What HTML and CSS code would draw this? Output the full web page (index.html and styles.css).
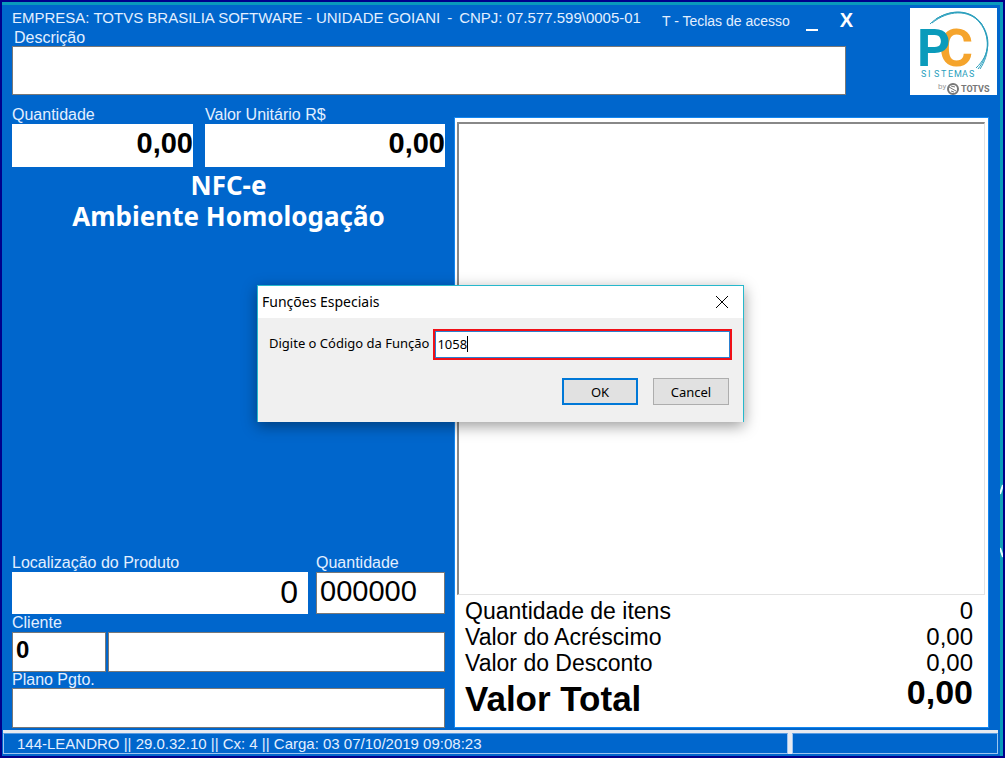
FILE: index.html
```html
<!DOCTYPE html>
<html lang="pt-BR">
<head>
<meta charset="utf-8">
<title>PC Sistemas - NFC-e</title>
<link rel="stylesheet" href="styles.css">
</head>
<body>
<div class="app">
  <header class="top">
    <div class="top-main">
      <div class="title-row">
        <span class="company">EMPRESA: TOTVS BRASILIA SOFTWARE - UNIDADE GOIANI</span>
        <span class="company">-</span>
        <span class="company">CNPJ: 07.577.599\0005-01</span>
        <button class="link-button" type="button">T - Teclas de acesso</button>
        <button class="window-button" type="button" aria-label="Minimizar"><span class="minimize"></span></button>
        <button class="window-button" type="button">X</button>
      </div>
      <label class="label label-description" for="descricao">Descrição</label>
      <input class="field field-description" id="descricao" type="text">
    </div>
    <svg class="logo" viewBox="0 0 87 87" role="img" aria-label="PC Sistemas by TOTVS">
      <rect width="87" height="87" fill="#fff"/>
      <g fill="none" stroke="#2a9fbd">
        <path d="M20 16C34 2 58-1 70 14C82 29 80 47 66 60" stroke-width="1"/>
        <path d="M22 15C38 2 59 1 70 15C81 29 79 47 68 61" stroke-width="1"/>
        <path d="M26 11C42 1 60 2 71 15C80 29 80 46 70 61" stroke-width="1"/>
      </g>
      <text class="logo-c" x="29" y="58">C</text>
      <text class="logo-p" x="7" y="58">P</text>
      <text class="logo-name" x="11 18 24 31 38 44 52 59" y="69">SISTEMAS</text>
      <text class="logo-by" x="28" y="81">by</text>
      <circle cx="43" cy="81" r="5" fill="none" stroke="#777" stroke-width="2"/>
      <path d="M39 79l7 4M41 78l4 1M41 83l3 1" stroke="#777" stroke-width="1"/>
      <text class="logo-totvs" x="51" y="84">TOTVS</text>
    </svg>
  </header>

  <main class="content">
    <section class="left">
      <div class="row row-values">
        <div class="cell cell-quantity">
          <label class="label" for="qtd">Quantidade</label>
          <input class="field field-flat field-number" id="qtd" type="text" value="0,00">
        </div>
        <div class="cell cell-price">
          <label class="label" for="valor">Valor Unitário R$</label>
          <input class="field field-flat field-number" id="valor" type="text" value="0,00">
        </div>
      </div>
      <h1 class="environment">NFC-e<br>Ambiente Homologação</h1>
      <div class="row row-location">
        <div class="cell cell-location">
          <label class="label" for="local">Localização do Produto</label>
          <input class="field field-flat field-location" id="local" type="text" value="0">
        </div>
        <div class="cell cell-stock">
          <label class="label" for="estoque">Quantidade</label>
          <input class="field field-stock" id="estoque" type="text" value="000000">
        </div>
      </div>
      <label class="label" for="cliente">Cliente</label>
      <div class="row row-client">
        <input class="field field-code" id="cliente" type="text" value="0">
        <input class="field field-client" type="text" aria-label="Nome do cliente">
      </div>
      <label class="label label-plan" for="plano">Plano Pgto.</label>
      <input class="field field-plan" id="plano" type="text">
    </section>

    <section class="receipt">
      <div class="receipt-list"></div>
      <dl class="totals">
        <div class="total"><dt>Quantidade de itens</dt><dd>0</dd></div>
        <div class="total"><dt>Valor do Acréscimo</dt><dd>0,00</dd></div>
        <div class="total"><dt>Valor do Desconto</dt><dd>0,00</dd></div>
        <div class="total total-final"><dt>Valor Total</dt><dd>0,00</dd></div>
      </dl>
    </section>
  </main>

  <footer class="status">
    <div class="status-cell status-info">144-LEANDRO || 29.0.32.10 || Cx: 4 || Carga: 03 07/10/2019 09:08:23</div>
    <div class="status-cell status-extra"></div>
  </footer>
  <svg class="edge-mark" viewBox="0 0 3 74" aria-hidden="true">
    <rect width="3" height="74" fill="#12a0b8"/>
    <path d="M3 1L0 10M0 64L3 73" stroke="#e4ffff" stroke-width="2"/>
  </svg>
</div>

<form class="dialog" role="dialog" aria-labelledby="dialog-title">
  <div class="dialog-bar">
    <h2 class="dialog-title" id="dialog-title">Funções Especiais</h2>
    <button class="dialog-close" type="button" aria-label="Fechar">
      <svg class="close-icon" viewBox="0 0 12 12"><path d="M0 0L12 12M12 0L0 12" stroke="#000" stroke-width="1"/></svg>
    </button>
  </div>
  <div class="dialog-body">
    <div class="dialog-field">
      <label class="dialog-label" for="codigo">Digite o Código da Função</label>
      <div class="code-wrap">
        <input class="code-input" id="codigo" type="text" value="1058">
        <span class="caret"></span>
      </div>
    </div>
    <div class="dialog-actions">
      <button class="dialog-button dialog-button-default" type="button">OK</button>
      <button class="dialog-button" type="button">Cancel</button>
    </div>
  </div>
</form>
</body>
</html>
```
FILE: styles.css
```css
* {
  box-sizing: border-box;
}

body {
  margin: 0;
  font-family: "Liberation Sans", Arial, sans-serif;
  color: #000;
}

button,
input {
  font-family: inherit;
  margin: 0;
}

.app {
  position: relative;
  display: flex;
  flex-direction: column;
  min-height: 100vh;
  background: #0066cc;
  border: 2px solid #00008b;
  box-shadow: inset -3px 3px 0 #0a9abb;
}

/* header */
.top {
  display: flex;
  justify-content: space-between;
  padding: 6px 6px 0 10px;
}

.top-main {
  flex: 1;
  display: flex;
  flex-direction: column;
  max-width: 834px;
}

.title-row {
  display: flex;
  align-items: center;
  height: 22px;
  color: #e3efff;
}

.company {
  font-size: 15px;
  line-height: 22px;
  padding-bottom: 2px;
  margin-right: 7px;
  white-space: nowrap;
}

.link-button,
.window-button {
  border: 0;
  padding: 0;
  background: none;
  color: #e3efff;
}

.link-button {
  margin: 4px 16px 0 14px;
  font-size: 14px;
  white-space: nowrap;
}

.window-button {
  display: flex;
  align-items: end;
  height: 24px;
  margin-right: 22px;
  font-size: 20px;
  font-weight: bold;
  line-height: 22px;
  color: #fff;
}

.minimize {
  width: 12px;
  height: 2px;
  background: #fff;
}

.label {
  display: block;
  font-size: 16px;
  line-height: 18px;
  color: #e3efff;
}

.label-description {
  padding-left: 2px;
  line-height: 16px;
}

.field {
  display: block;
  width: 100%;
  min-width: 0;
  padding: 0 3px;
  border: 1px solid #787878;
  border-radius: 0;
  background: #fff;
}

.field-flat {
  border: 0;
}

.field-description {
  height: 49px;
}

.logo {
  flex: none;
  width: 87px;
  height: 87px;
}

.logo-p,
.logo-c {
  font: bold 52px Roboto, sans-serif;
}

.logo-p {
  fill: #0b9bbb;
}

.logo-c {
  fill: #f5a42c;
}

.logo-name {
  font: 9px Roboto, sans-serif;
  fill: #2a9fbd;
}

.logo-by {
  font: 8px Roboto, sans-serif;
  fill: #999;
}

.logo-totvs {
  font: bold 9px Roboto, sans-serif;
  fill: #777;
}

/* content */
.content {
  flex: 1;
  display: grid;
  grid-template-columns: 433fr 535fr;
  gap: 9px;
  padding: 11px 14px 0 10px;
}

.left {
  display: flex;
  flex-direction: column;
}

.row {
  display: flex;
}

.row-values {
  gap: 12px;
}

.cell-quantity {
  flex: 181;
}

.cell-price {
  flex: 240;
}

.field-number {
  height: 43px;
  padding: 0 0 4px;
  font-size: 29px;
  font-weight: bold;
  text-align: right;
}

.environment {
  flex: 1;
  margin: 3px 0 0;
  font-family: Tahoma, "Noto Sans", sans-serif;
  font-size: 26px;
  line-height: 31px;
  text-align: center;
  color: #fff;
}

.row-location {
  gap: 8px;
}

.cell-location {
  flex: 296;
}

.cell-stock {
  flex: 129;
}

.field-location,
.field-stock {
  height: 42px;
}

.field-location {
  padding: 0 10px 2px;
  font-size: 32px;
  text-align: right;
}

.field-stock {
  padding-bottom: 4px;
  font-size: 29px;
}

.row-client {
  gap: 2px;
}

.field-code {
  flex: 88;
  height: 40px;
  padding-bottom: 4px;
  font-size: 24px;
  font-weight: bold;
}

.field-client {
  flex: 337;
}

.label-plan {
  line-height: 16px;
}

.field-plan {
  height: 40px;
}

.receipt {
  display: flex;
  flex-direction: column;
  margin-top: 11px;
  padding: 4px 3px 0 2px;
  background: #fff;
  border: 1px solid #1487f0;
}

.receipt-list {
  flex: 1;
  border: 1px solid #e3e3e3;
  border-top: 2px solid #888;
  border-left: 2px solid #888;
}

.totals {
  margin: 0;
  padding: 3px 12px 5px 8px;
}

.total {
  display: flex;
  justify-content: space-between;
  font-size: 23px;
  line-height: 26px;
}

.total dd {
  margin: 0;
  font-size: 24px;
}

.total-final {
  font-size: 35px;
  font-weight: bold;
  line-height: 46px;
}

.total-final dd {
  font-size: 34px;
  line-height: 32px;
}

/* status bar */
.status {
  display: flex;
  gap: 4px;
  margin: 2px 5px 2px 1px;
  padding-top: 3px;
  background: #e8eaf0;
}

.status-cell {
  height: 21px;
  background: #0066cc;
  border: 1px solid #9cc4f0;
  border-top-color: #5a9be0;
}

.status-info {
  flex: 775;
  padding-left: 13px;
  font-size: 15px;
  line-height: 19px;
  color: #e3efff;
}

.status-extra {
  flex: 205;
}

.edge-mark {
  position: absolute;
  top: 482px;
  right: 0;
  width: 3px;
  height: 74px;
}

/* dialog */
.dialog {
  position: absolute;
  top: 285px;
  left: 257px;
  width: 487px;
  border: 1px solid #26b8cc;
  border-bottom: 0;
  background: #f0f0f0;
  box-shadow: 0 4px 14px rgba(0, 0, 0, 0.4);
}

.dialog-bar {
  display: flex;
  align-items: center;
  justify-content: space-between;
  height: 32px;
  padding: 0 15px 0 4px;
  background: #fff;
}

.dialog-title {
  margin: 0;
  padding-bottom: 2px;
  font: 14px "Segoe UI", "Noto Sans", sans-serif;
}

.dialog-close {
  display: flex;
  padding: 0;
  border: 0;
  background: none;
}

.close-icon {
  width: 12px;
  height: 12px;
}

.dialog-body {
  padding: 11px 11px 17px;
  font-family: Tahoma, "Noto Sans", sans-serif;
  font-size: 13px;
}

.dialog-field {
  display: flex;
  align-items: center;
  gap: 4px;
}

.dialog-label {
  white-space: nowrap;
  padding-bottom: 3px;
}

.code-wrap {
  position: relative;
  flex: 1;
}

.code-input {
  display: block;
  width: 100%;
  height: 31px;
  padding: 0 2px 2px;
  border: 2px solid #f01018;
  border-radius: 0;
  background: #fff;
  box-shadow: inset 0 0 0 1px #2a80d0;
  font-size: 13px;
}

.caret {
  position: absolute;
  top: 7px;
  left: 34px;
  width: 1px;
  height: 16px;
  background: #000;
}

.dialog-actions {
  display: flex;
  justify-content: flex-end;
  gap: 15px;
  padding: 18px 3px 0 0;
}

.dialog-button {
  width: 76px;
  height: 27px;
  padding: 0;
  border: 1px solid #adadad;
  background: #e1e1e1;
  font-size: 13px;
}

.dialog-button-default {
  border: 2px solid #0078d7;
}
```
